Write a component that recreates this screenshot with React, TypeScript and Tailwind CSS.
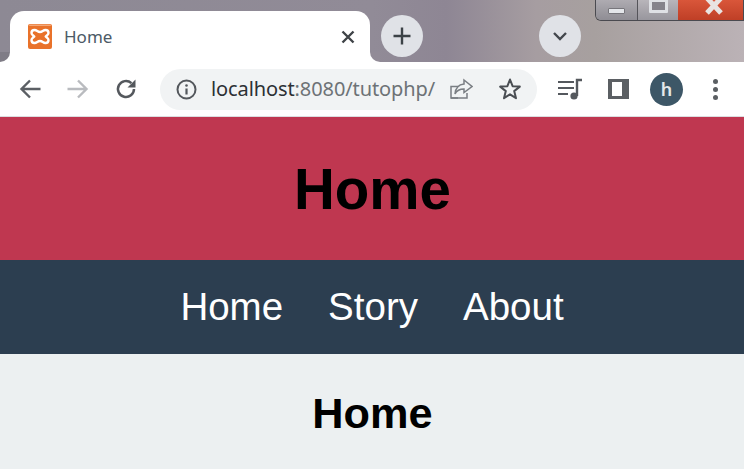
const sans = "font-['Liberation_Sans',Arial,sans-serif]";

const Favicon = () => (
  <svg width="24" height="25" viewBox="0 0 24 25" className="shrink-0">
    <rect x="0" y="0" width="24" height="25" rx="2" fill="#e9722a" />
    <rect x="1" y="0.5" width="22" height="1.5" rx="0.7" fill="#f4a878" />
    <path
      d="M6.500 6c2.500 0 3 2 5.500 2s3-2 5.500-2c2 0 3 1.200 3 3 0 2-1.800 2.300-2.800 3.500 1 1.200 2.800 1.500 2.800 3.500 0 1.800-1 3-3 3-2.500 0-3-2-5.500-2s-3 2-5.500 2c-2 0-3-1.200-3-3 0-2 1.800-2.300 2.800-3.500-1-1.200-2.800-1.500-2.800-3.500 0-1.800 1-3 3-3z"
      fill="none"
      stroke="#fff"
      strokeWidth="2.400"
      strokeLinejoin="round"
    />
  </svg>
);

const CircleButton = ({ children }: { children: React.ReactNode }) => (
  <div className="w-[42px] h-[42px] rounded-full bg-[#e0e2e7] flex items-center justify-center">
    {children}
  </div>
);

const WindowControls = () => (
  <div className="absolute top-0 right-0 w-[149px] h-[21px] flex rounded-bl-[6px] border border-t-0 border-[#4a4a50] overflow-hidden">
    <div className="w-[42px] h-full bg-gradient-to-b from-[#aeabb1] to-[#8f8d94] flex items-center justify-center border-r border-[#55545a]">
      <div className="w-[17px] h-[6px] mt-[1px] rounded-[1px] bg-[#e4e6ea] border border-[#77767c]" />
    </div>
    <div className="w-[40px] h-full bg-gradient-to-b from-[#b8b5ba] to-[#98969d] flex justify-center">
      <div className="w-[19px] h-[14px] -mt-[1px] rounded-[1px] bg-[#85838b] border-[3px] border-[#dfe1e5]" />
    </div>
    <div className="flex-1 h-full bg-gradient-to-b from-[#d9563a] to-[#bf3f26] flex justify-center pl-[6px]">
      <svg width="30" height="16" viewBox="0 0 30 16">
        <path d="M8 -2 L22 13 M22 -2 L8 13" stroke="#e9e4e2" strokeWidth="5" fill="none" />
      </svg>
    </div>
  </div>
);

const TitleBar = () => (
  <div className="relative h-[62px] bg-[linear-gradient(90deg,#8d8994_0%,#918b97_50%,#8e8694_60%,#a69da1_72%,#a7a09f_80%,#bbb2b6_100%)] flex items-end">
    <div className="relative ml-[10px] w-[360px] h-[51px] bg-white rounded-t-[14px] flex items-center pl-[18px] pr-[15px]">
      <div className="absolute -left-[10px] bottom-0 w-[10px] h-[10px] bg-white">
        <div className="w-full h-full bg-[#7f7c86] rounded-br-[10px]" />
      </div>
      <div className="absolute -right-[10px] bottom-0 w-[10px] h-[10px] bg-white">
        <div className="w-full h-full bg-[#928b97] rounded-bl-[10px]" />
      </div>
      <Favicon />
      <span className="ml-[12px] flex-1 text-[17px] text-[#4c5a66] font-['Noto_Sans',sans-serif]">Home</span>
      <svg width="14" height="14" viewBox="0 0 14 14">
        <path d="M1.500 1.500 L12.500 12.500 M12.500 1.500 L1.500 12.500" stroke="#3f4347" strokeWidth="2.400" />
      </svg>
    </div>
    <div className="self-start mt-[15px] ml-[11px]">
      <CircleButton>
        <svg width="20" height="20" viewBox="0 0 20 20">
          <path d="M10 1.500 V18.500 M1.500 10 H18.500" stroke="#3c4247" strokeWidth="2.400" />
        </svg>
      </CircleButton>
    </div>
    <div className="self-start mt-[15px] ml-[116px]">
      <CircleButton>
        <svg width="16" height="10" viewBox="0 0 16 10">
          <path d="M2 2 L8 8 L14 2" fill="none" stroke="#43474d" strokeWidth="2.400" />
        </svg>
      </CircleButton>
    </div>
    <WindowControls />
  </div>
);

const Toolbar = () => (
  <div className="h-[54px] bg-white flex items-center">
    <div className="flex items-center gap-[26px] ml-[19px]">
      <svg width="22" height="20" viewBox="0 0 22 20">
        <path d="M21.500 10 H3 M11 1.500 L2.500 10 L11 18.500" fill="none" stroke="#5b5f64" strokeWidth="2.400" />
      </svg>
      <svg width="22" height="20" viewBox="0 0 22 20">
        <path d="M0.500 10 H19 M11 1.500 L19.500 10 L11 18.500" fill="none" stroke="#b9bbbf" strokeWidth="2.400" />
      </svg>
      <svg width="22" height="22" viewBox="0 0 22 22">
        <path d="M19 11 A8 8 0 1 1 16.400 5.100" fill="none" stroke="#54585d" strokeWidth="2.500" />
        <path d="M20.500 1.500 V9.500 H12.500 Z" fill="#54585d" />
      </svg>
    </div>
    <div className="ml-[23px] w-[377px] h-[41px] rounded-full bg-[#f1f3f4] flex items-center pl-[16px]">
      <svg width="21" height="21" viewBox="0 0 21 21" className="shrink-0">
        <circle cx="10.500" cy="10.500" r="9" fill="none" stroke="#53575c" strokeWidth="2" />
        <path d="M10.500 9.500 V15.500" stroke="#53575c" strokeWidth="2.200" />
        <circle cx="10.500" cy="6.500" r="1.300" fill="#53575c" />
      </svg>
      <span className="ml-[14px] w-[238px] text-[20px] leading-none whitespace-nowrap font-['Noto_Sans',sans-serif] tracking-[-0.1px] text-[#6d7276]">
        <span className="text-[#2c3034]">localhost</span>:8080/tutophp/
      </span>
      <svg width="24" height="24" viewBox="0 0 24 24" className="shrink-0">
        <path d="M9 21 H2 V9.500 H9" fill="none" stroke="#7a7e83" strokeWidth="1.500" />
        <path d="M2 21 H18 V16" fill="none" stroke="#7a7e83" strokeWidth="1.500" />
        <path d="M15 3 L23 9.500 L15 15.500 V12 C11 12 8 13 6 17 C6.500 11 10 7.500 15 7 Z" fill="none" stroke="#7a7e83" strokeWidth="1.500" />
      </svg>
      <svg width="24" height="24" viewBox="0 0 24 24" className="ml-[25px] shrink-0">
        <path d="M12 2.500 L14.600 9.200 L21.800 9.600 L16.200 14.100 L18 21.200 L12 17.300 L6 21.200 L7.800 14.100 L2.200 9.600 L9.400 9.200 Z" fill="none" stroke="#4a4e53" strokeWidth="2" strokeLinejoin="round" />
      </svg>
    </div>
    <div className="flex items-center ml-[21px]">
      <svg width="25" height="24" viewBox="0 0 25 24">
        <path d="M0 5 H16 M0 11 H16 M0 17 H10" stroke="#54585d" strokeWidth="2.200" />
        <path d="M19 19 V3 H24" fill="none" stroke="#54585d" strokeWidth="2.400" />
        <circle cx="16" cy="19" r="3.600" fill="#54585d" />
      </svg>
      <svg width="21" height="20" viewBox="0 0 21 20" className="ml-[25px]">
        <rect x="0" y="0" width="21" height="20" fill="#5b5f63" />
        <rect x="4" y="3" width="10" height="14" fill="#fff" />
      </svg>
      <div className="ml-[21px] w-[33px] h-[33px] rounded-full bg-[#3d5767] flex items-center justify-center text-[18px] font-semibold text-[#e4e8ea] font-['Noto_Sans',sans-serif]">
        h
      </div>
      <div className="ml-[30px] flex flex-col gap-[3px]">
        <div className="w-[5px] h-[5px] rounded-full bg-[#5b5f63]" />
        <div className="w-[5px] h-[5px] rounded-full bg-[#5b5f63]" />
        <div className="w-[5px] h-[5px] rounded-full bg-[#5b5f63]" />
      </div>
    </div>
  </div>
);

export default function App() {
  return (
    <div className={`w-[744px] h-[469px] overflow-hidden bg-[#ecf0f1] ${sans}`}>
      <TitleBar />
      <Toolbar />
      <div className="h-[1px] bg-[#dcdde0]" />
      <header className="h-[143px] pt-[3px] pl-[1px] bg-[#bf3750] flex items-center justify-center">
        <h1 className="text-[56.5px] leading-none font-bold text-black">Home</h1>
      </header>
      <nav className="h-[94px] bg-[#2c3e50] flex items-center justify-center gap-[45px] text-[38.5px] leading-none text-white">
        <a>Home</a>
        <a>Story</a>
        <a>About</a>
      </nav>
      <main className="h-[115px] pt-[38px] pl-[1px] text-center">
        <h2 className="text-[43.3px] leading-none font-bold text-black">Home</h2>
      </main>
    </div>
  );
}
